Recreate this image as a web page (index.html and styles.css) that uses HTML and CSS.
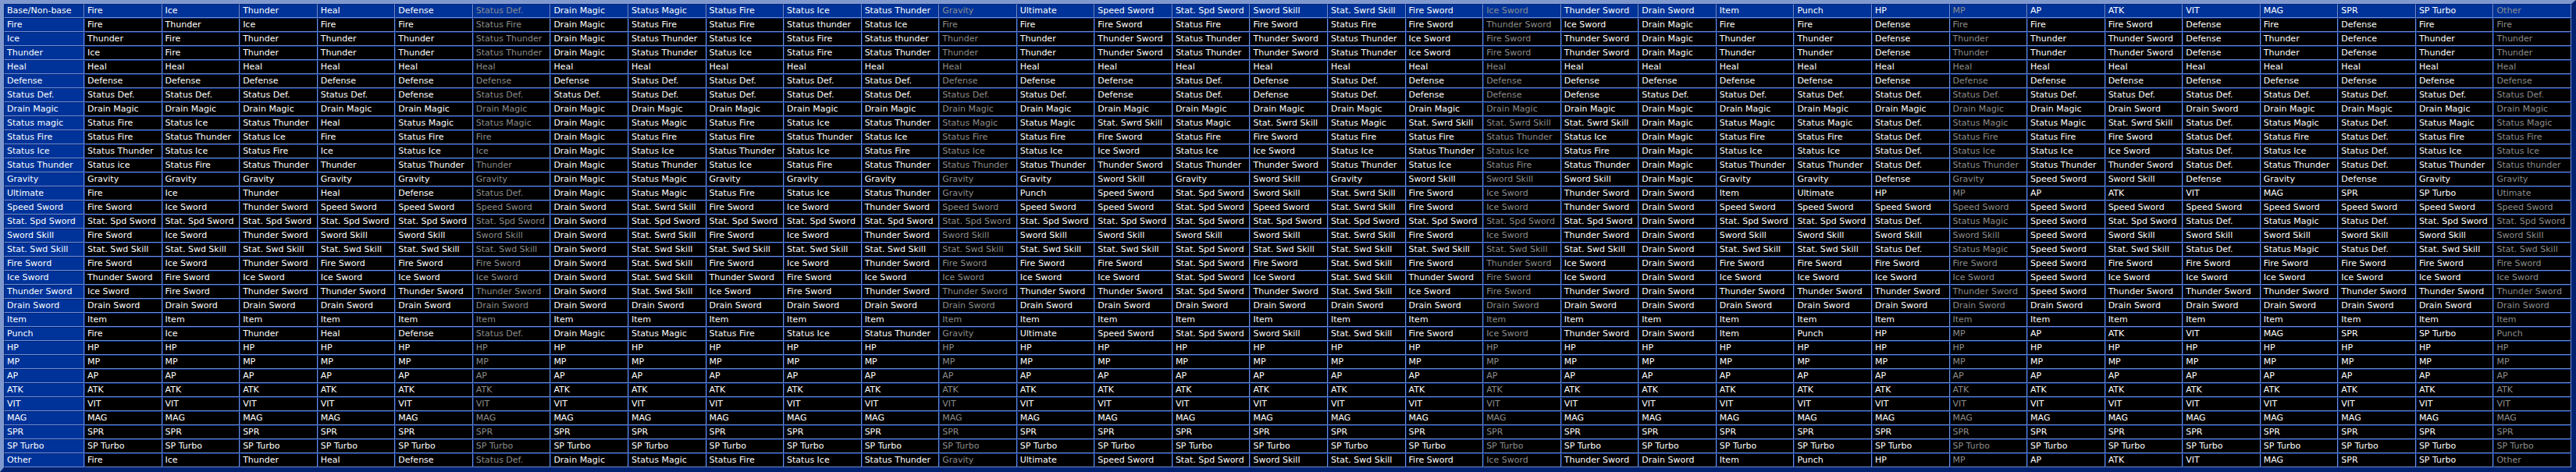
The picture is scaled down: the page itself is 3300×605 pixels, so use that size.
FILE: index.html
```html
<!DOCTYPE html>
<html>
<head>
<meta charset="utf-8">
<title>Materia combinations</title>
<link rel="stylesheet" href="styles.css">
</head>
<body>
<table class="grid">
<colgroup><col class="label-col"></colgroup>
<tr><th>Base/Non-base</th><th>Fire</th><th>Ice</th><th>Thunder</th><th>Heal</th><th>Defense</th><th>Status Def.</th><th>Drain Magic</th><th>Status Magic</th><th>Status Fire</th><th>Status Ice</th><th>Status Thunder</th><th>Gravity</th><th>Ultimate</th><th>Speed Sword</th><th>Stat. Spd Sword</th><th>Sword Skill</th><th>Stat. Swrd Skill</th><th>Fire Sword</th><th>Ice Sword</th><th>Thunder Sword</th><th>Drain Sword</th><th>Item</th><th>Punch</th><th>HP</th><th>MP</th><th>AP</th><th>ATK</th><th>VIT</th><th>MAG</th><th>SPR</th><th>SP Turbo</th><th>Other</th></tr>
<tr><th>Fire</th><td>Fire</td><td>Thunder</td><td>Ice</td><td>Fire</td><td>Fire</td><td>Status Fire</td><td>Drain Magic</td><td>Status Fire</td><td>Status Fire</td><td>Status thunder</td><td>Status Ice</td><td>Fire</td><td>Fire</td><td>Fire Sword</td><td>Status Fire</td><td>Fire Sword</td><td>Status Fire</td><td>Fire Sword</td><td>Thunder Sword</td><td>Ice Sword</td><td>Drain Magic</td><td>Fire</td><td>Fire</td><td>Defense</td><td>Fire</td><td>Fire</td><td>Fire Sword</td><td>Defense</td><td>Fire</td><td>Defense</td><td>Fire</td><td>Fire</td></tr>
<tr><th>Ice</th><td>Thunder</td><td>Fire</td><td>Thunder</td><td>Thunder</td><td>Thunder</td><td>Status Thunder</td><td>Drain Magic</td><td>Status Thunder</td><td>Status Ice</td><td>Status Fire</td><td>Status thunder</td><td>Thunder</td><td>Thunder</td><td>Thunder Sword</td><td>Status Thunder</td><td>Thunder Sword</td><td>Status Thunder</td><td>Ice Sword</td><td>Fire Sword</td><td>Thunder Sword</td><td>Drain Magic</td><td>Thunder</td><td>Thunder</td><td>Defense</td><td>Thunder</td><td>Thunder</td><td>Thunder Sword</td><td>Defense</td><td>Thunder</td><td>Defence</td><td>Thunder</td><td>Thunder</td></tr>
<tr><th>Thunder</th><td>Ice</td><td>Fire</td><td>Thunder</td><td>Thunder</td><td>Thunder</td><td>Status Thunder</td><td>Drain Magic</td><td>Status Thunder</td><td>Status Ice</td><td>Status Fire</td><td>Status Thunder</td><td>Thunder</td><td>Thunder</td><td>Thunder Sword</td><td>Status Thunder</td><td>Thunder Sword</td><td>Status Thunder</td><td>Ice Sword</td><td>Fire Sword</td><td>Thunder Sword</td><td>Drain Magic</td><td>Thunder</td><td>Thunder</td><td>Defense</td><td>Thunder</td><td>Thunder</td><td>Thunder Sword</td><td>Defense</td><td>Thunder</td><td>Defense</td><td>Thunder</td><td>Thunder</td></tr>
<tr><th>Heal</th><td>Heal</td><td>Heal</td><td>Heal</td><td>Heal</td><td>Heal</td><td>Heal</td><td>Heal</td><td>Heal</td><td>Heal</td><td>Heal</td><td>Heal</td><td>Heal</td><td>Heal</td><td>Heal</td><td>Heal</td><td>Heal</td><td>Heal</td><td>Heal</td><td>Heal</td><td>Heal</td><td>Heal</td><td>Heal</td><td>Heal</td><td>Heal</td><td>Heal</td><td>Heal</td><td>Heal</td><td>Heal</td><td>Heal</td><td>Heal</td><td>Heal</td><td>Heal</td></tr>
<tr><th>Defense</th><td>Defense</td><td>Defense</td><td>Defense</td><td>Defense</td><td>Defense</td><td>Defense</td><td>Defense</td><td>Status Def.</td><td>Status Def.</td><td>Status Def.</td><td>Status Def.</td><td>Defense</td><td>Defense</td><td>Defense</td><td>Status Def.</td><td>Defense</td><td>Status Def.</td><td>Defense</td><td>Defense</td><td>Defense</td><td>Defense</td><td>Defense</td><td>Defense</td><td>Defense</td><td>Defense</td><td>Defense</td><td>Defense</td><td>Defense</td><td>Defense</td><td>Defense</td><td>Defense</td><td>Defense</td></tr>
<tr><th>Status Def.</th><td>Status Def.</td><td>Status Def.</td><td>Status Def.</td><td>Status Def.</td><td>Defense</td><td>Status Def.</td><td>Status Def.</td><td>Status Def.</td><td>Status Def.</td><td>Status Def.</td><td>Status Def.</td><td>Status Def.</td><td>Status Def.</td><td>Defense</td><td>Status Def.</td><td>Defense</td><td>Status Def.</td><td>Defense</td><td>Defense</td><td>Defense</td><td>Status Def.</td><td>Status Def.</td><td>Status Def.</td><td>Status Def.</td><td>Status Def.</td><td>Status Def.</td><td>Status Def.</td><td>Status Def.</td><td>Status Def.</td><td>Status Def.</td><td>Status Def.</td><td>Status Def.</td></tr>
<tr><th>Drain Magic</th><td>Drain Magic</td><td>Drain Magic</td><td>Drain Magic</td><td>Drain Magic</td><td>Drain Magic</td><td>Drain Magic</td><td>Drain Magic</td><td>Drain Magic</td><td>Drain Magic</td><td>Drain Magic</td><td>Drain Magic</td><td>Drain Magic</td><td>Drain Magic</td><td>Drain Magic</td><td>Drain Magic</td><td>Drain Magic</td><td>Drain Magic</td><td>Drain Magic</td><td>Drain Magic</td><td>Drain Magic</td><td>Drain Magic</td><td>Drain Magic</td><td>Drain Magic</td><td>Drain Magic</td><td>Drain Magic</td><td>Drain Magic</td><td>Drain Sword</td><td>Drain Sword</td><td>Drain Magic</td><td>Drain Magic</td><td>Drain Magic</td><td>Drain Magic</td></tr>
<tr><th>Status magic</th><td>Status Fire</td><td>Status Ice</td><td>Status Thunder</td><td>Heal</td><td>Status Magic</td><td>Status Magic</td><td>Drain Magic</td><td>Status Magic</td><td>Status Fire</td><td>Status Ice</td><td>Status Thunder</td><td>Status Magic</td><td>Status Magic</td><td>Stat. Swrd Skill</td><td>Status Magic</td><td>Stat. Swrd Skill</td><td>Status Magic</td><td>Stat. Swrd Skill</td><td>Stat. Swrd Skill</td><td>Stat. Swrd Skill</td><td>Drain Magic</td><td>Status Magic</td><td>Status Magic</td><td>Status Def.</td><td>Status Magic</td><td>Status Magic</td><td>Stat. Swrd Skill</td><td>Status Def.</td><td>Status Magic</td><td>Status Def.</td><td>Status Magic</td><td>Status Magic</td></tr>
<tr><th>Status Fire</th><td>Status Fire</td><td>Status Thunder</td><td>Status Ice</td><td>Fire</td><td>Status Fire</td><td>Fire</td><td>Drain Magic</td><td>Status Fire</td><td>Status Fire</td><td>Status Thunder</td><td>Status Ice</td><td>Status Fire</td><td>Status Fire</td><td>Fire Sword</td><td>Status Fire</td><td>Fire Sword</td><td>Status Fire</td><td>Status Fire</td><td>Status Thunder</td><td>Status Ice</td><td>Drain Magic</td><td>Status Fire</td><td>Status Fire</td><td>Status Def.</td><td>Status Fire</td><td>Status Fire</td><td>Fire Sword</td><td>Status Def.</td><td>Status Fire</td><td>Status Def.</td><td>Status Fire</td><td>Status Fire</td></tr>
<tr><th>Status Ice</th><td>Status Thunder</td><td>Status Ice</td><td>Status Fire</td><td>Ice</td><td>Status Ice</td><td>Ice</td><td>Drain Magic</td><td>Status Ice</td><td>Status Thunder</td><td>Status Ice</td><td>Status Fire</td><td>Status Ice</td><td>Status Ice</td><td>Ice Sword</td><td>Status Ice</td><td>Ice Sword</td><td>Status Ice</td><td>Status Thunder</td><td>Status Ice</td><td>Status Fire</td><td>Drain Magic</td><td>Status Ice</td><td>Status Ice</td><td>Status Def.</td><td>Status Ice</td><td>Status Ice</td><td>Ice Sword</td><td>Status Def.</td><td>Status Ice</td><td>Status Def.</td><td>Status Ice</td><td>Status Ice</td></tr>
<tr><th>Status Thunder</th><td>Status ice</td><td>Status Fire</td><td>Status Thunder</td><td>Thunder</td><td>Status Thunder</td><td>Thunder</td><td>Drain Magic</td><td>Status Thunder</td><td>Status Ice</td><td>Status Fire</td><td>Status Thunder</td><td>Status Thunder</td><td>Status Thunder</td><td>Thunder Sword</td><td>Status Thunder</td><td>Thunder Sword</td><td>Status Thunder</td><td>Status Ice</td><td>Status Fire</td><td>Status Thunder</td><td>Drain Magic</td><td>Status Thunder</td><td>Status Thunder</td><td>Status Def.</td><td>Status Thunder</td><td>Status Thunder</td><td>Thunder Sword</td><td>Status Def.</td><td>Status Thunder</td><td>Status Def.</td><td>Status Thunder</td><td>Status thunder</td></tr>
<tr><th>Gravity</th><td>Gravity</td><td>Gravity</td><td>Gravity</td><td>Gravity</td><td>Gravity</td><td>Gravity</td><td>Drain Magic</td><td>Status Magic</td><td>Gravity</td><td>Gravity</td><td>Gravity</td><td>Gravity</td><td>Gravity</td><td>Sword Skill</td><td>Gravity</td><td>Sword Skill</td><td>Gravity</td><td>Sword Skill</td><td>Sword Skill</td><td>Sword Skill</td><td>Drain Magic</td><td>Gravity</td><td>Gravity</td><td>Defense</td><td>Gravity</td><td>Speed Sword</td><td>Sword Skill</td><td>Defense</td><td>Gravity</td><td>Defense</td><td>Gravity</td><td>Gravity</td></tr>
<tr><th>Ultimate</th><td>Fire</td><td>Ice</td><td>Thunder</td><td>Heal</td><td>Defense</td><td>Status Def.</td><td>Drain Magic</td><td>Status Magic</td><td>Status Fire</td><td>Status Ice</td><td>Status Thunder</td><td>Gravity</td><td>Punch</td><td>Speed Sword</td><td>Stat. Spd Sword</td><td>Sword Skill</td><td>Stat. Swrd Skill</td><td>Fire Sword</td><td>Ice Sword</td><td>Thunder Sword</td><td>Drain Sword</td><td>Item</td><td>Ultimate</td><td>HP</td><td>MP</td><td>AP</td><td>ATK</td><td>VIT</td><td>MAG</td><td>SPR</td><td>SP Turbo</td><td>Utimate</td></tr>
<tr><th>Speed Sword</th><td>Fire Sword</td><td>Ice Sword</td><td>Thunder Sword</td><td>Speed Sword</td><td>Speed Sword</td><td>Speed Sword</td><td>Drain Sword</td><td>Stat. Swrd Skill</td><td>Fire Sword</td><td>Ice Sword</td><td>Thunder Sword</td><td>Speed Sword</td><td>Speed Sword</td><td>Speed Sword</td><td>Stat. Spd Sword</td><td>Speed Sword</td><td>Stat. Swrd Skill</td><td>Fire Sword</td><td>Ice Sword</td><td>Thunder Sword</td><td>Drain Sword</td><td>Speed Sword</td><td>Speed Sword</td><td>Speed Sword</td><td>Speed Sword</td><td>Speed Sword</td><td>Speed Sword</td><td>Speed Sword</td><td>Speed Sword</td><td>Speed Sword</td><td>Speed Sword</td><td>Speed Sword</td></tr>
<tr><th>Stat. Spd Sword</th><td>Stat. Spd Sword</td><td>Stat. Spd Sword</td><td>Stat. Spd Sword</td><td>Stat. Spd Sword</td><td>Stat. Spd Sword</td><td>Stat. Spd Sword</td><td>Drain Sword</td><td>Stat. Spd Sword</td><td>Stat. Spd Sword</td><td>Stat. Spd Sword</td><td>Stat. Spd Sword</td><td>Stat. Spd Sword</td><td>Stat. Spd Sword</td><td>Stat. Spd Sword</td><td>Stat. Spd Sword</td><td>Stat. Spd Sword</td><td>Stat. Spd Sword</td><td>Stat. Spd Sword</td><td>Stat. Spd Sword</td><td>Stat. Spd Sword</td><td>Drain Sword</td><td>Stat. Spd Sword</td><td>Stat. Spd Sword</td><td>Status Def.</td><td>Status Magic</td><td>Speed Sword</td><td>Stat. Spd Sword</td><td>Status Def.</td><td>Status Magic</td><td>Status Def.</td><td>Stat. Spd Sword</td><td>Stat. Spd Sword</td></tr>
<tr><th>Sword Skill</th><td>Fire Sword</td><td>Ice Sword</td><td>Thunder Sword</td><td>Sword Skill</td><td>Sword Skill</td><td>Sword Skill</td><td>Drain Sword</td><td>Stat. Swrd Skill</td><td>Fire Sword</td><td>Ice Sword</td><td>Thunder Sword</td><td>Sword Skill</td><td>Sword Skill</td><td>Sword Skill</td><td>Sword Skill</td><td>Sword Skill</td><td>Stat. Swrd Skill</td><td>Fire Sword</td><td>Ice Sword</td><td>Thunder Sword</td><td>Drain Sword</td><td>Sword Skill</td><td>Sword Skill</td><td>Sword Skill</td><td>Sword Skill</td><td>Speed Sword</td><td>Sword Skill</td><td>Sword Skill</td><td>Sword Skill</td><td>Sword Skill</td><td>Sword Skill</td><td>Sword Skill</td></tr>
<tr><th>Stat. Swd Skill</th><td>Stat. Swd Skill</td><td>Stat. Swd Skill</td><td>Stat. Swd Skill</td><td>Stat. Swd Skill</td><td>Stat. Swd Skill</td><td>Stat. Swd Skill</td><td>Drain Sword</td><td>Stat. Swd Skill</td><td>Stat. Swd Skill</td><td>Stat. Swd Skill</td><td>Stat. Swd Skill</td><td>Stat. Swd Skill</td><td>Stat. Swd Skill</td><td>Stat. Swd Skill</td><td>Stat. Spd Sword</td><td>Stat. Swd Skill</td><td>Stat. Swd Skill</td><td>Stat. Swd Skill</td><td>Stat. Swd Skill</td><td>Stat. Swd Skill</td><td>Drain Sword</td><td>Stat. Swd Skill</td><td>Stat. Swd Skill</td><td>Status Def.</td><td>Status Magic</td><td>Speed Sword</td><td>Stat. Swd Skill</td><td>Status Def.</td><td>Status Magic</td><td>Status Def.</td><td>Stat. Swd Skill</td><td>Stat. Swd Skill</td></tr>
<tr><th>Fire Sword</th><td>Fire Sword</td><td>Ice Sword</td><td>Thunder Sword</td><td>Fire Sword</td><td>Fire Sword</td><td>Fire Sword</td><td>Drain Sword</td><td>Stat. Swd Skill</td><td>Fire Sword</td><td>Ice Sword</td><td>Thunder Sword</td><td>Fire Sword</td><td>Fire Sword</td><td>Fire Sword</td><td>Stat. Spd Sword</td><td>Fire Sword</td><td>Stat. Swd Skill</td><td>Fire Sword</td><td>Thunder Sword</td><td>Ice Sword</td><td>Drain Sword</td><td>Fire Sword</td><td>Fire Sword</td><td>Fire Sword</td><td>Fire Sword</td><td>Speed Sword</td><td>Fire Sword</td><td>Fire Sword</td><td>Fire Sword</td><td>Fire Sword</td><td>Fire Sword</td><td>Fire Sword</td></tr>
<tr><th>Ice Sword</th><td>Thunder Sword</td><td>Fire Sword</td><td>Ice Sword</td><td>Ice Sword</td><td>Ice Sword</td><td>Ice Sword</td><td>Drain Sword</td><td>Stat. Swd Skill</td><td>Thunder Sword</td><td>Fire Sword</td><td>Ice Sword</td><td>Ice Sword</td><td>Ice Sword</td><td>Ice Sword</td><td>Stat. Spd Sword</td><td>Ice Sword</td><td>Stat. Swd Skill</td><td>Thunder Sword</td><td>Fire Sword</td><td>Ice Sword</td><td>Drain Sword</td><td>Ice Sword</td><td>Ice Sword</td><td>Ice Sword</td><td>Ice Sword</td><td>Speed Sword</td><td>Ice Sword</td><td>Ice Sword</td><td>Ice Sword</td><td>Ice Sword</td><td>Ice Sword</td><td>Ice Sword</td></tr>
<tr><th>Thunder Sword</th><td>Ice Sword</td><td>Fire Sword</td><td>Thunder Sword</td><td>Thunder Sword</td><td>Thunder Sword</td><td>Thunder Sword</td><td>Drain Sword</td><td>Stat. Swd Skill</td><td>Ice Sword</td><td>Fire Sword</td><td>Thunder Sword</td><td>Thunder Sword</td><td>Thunder Sword</td><td>Thunder Sword</td><td>Stat. Spd Sword</td><td>Thunder Sword</td><td>Stat. Swd Skill</td><td>Ice Sword</td><td>Fire Sword</td><td>Thunder Sword</td><td>Drain Sword</td><td>Thunder Sword</td><td>Thunder Sword</td><td>Thunder Sword</td><td>Thunder Sword</td><td>Speed Sword</td><td>Thunder Sword</td><td>Thunder Sword</td><td>Thunder Sword</td><td>Thunder Sword</td><td>Thunder Sword</td><td>Thunder Sword</td></tr>
<tr><th>Drain Sword</th><td>Drain Sword</td><td>Drain Sword</td><td>Drain Sword</td><td>Drain Sword</td><td>Drain Sword</td><td>Drain Sword</td><td>Drain Sword</td><td>Drain Sword</td><td>Drain Sword</td><td>Drain Sword</td><td>Drain Sword</td><td>Drain Sword</td><td>Drain Sword</td><td>Drain Sword</td><td>Drain Sword</td><td>Drain Sword</td><td>Drain Sword</td><td>Drain Sword</td><td>Drain Sword</td><td>Drain Sword</td><td>Drain Sword</td><td>Drain Sword</td><td>Drain Sword</td><td>Drain Sword</td><td>Drain Sword</td><td>Drain Sword</td><td>Drain Sword</td><td>Drain Sword</td><td>Drain Sword</td><td>Drain Sword</td><td>Drain Sword</td><td>Drain Sword</td></tr>
<tr><th>Item</th><td>Item</td><td>Item</td><td>Item</td><td>Item</td><td>Item</td><td>Item</td><td>Item</td><td>Item</td><td>Item</td><td>Item</td><td>Item</td><td>Item</td><td>Item</td><td>Item</td><td>Item</td><td>Item</td><td>Item</td><td>Item</td><td>Item</td><td>Item</td><td>Item</td><td>Item</td><td>Item</td><td>Item</td><td>Item</td><td>Item</td><td>Item</td><td>Item</td><td>Item</td><td>Item</td><td>Item</td><td>Item</td></tr>
<tr><th>Punch</th><td>Fire</td><td>Ice</td><td>Thunder</td><td>Heal</td><td>Defense</td><td>Status Def.</td><td>Drain Magic</td><td>Status Magic</td><td>Status Fire</td><td>Status Ice</td><td>Status Thunder</td><td>Gravity</td><td>Ultimate</td><td>Speed Sword</td><td>Stat. Spd Sword</td><td>Sword Skill</td><td>Stat. Swd Skill</td><td>Fire Sword</td><td>Ice Sword</td><td>Thunder Sword</td><td>Drain Sword</td><td>Item</td><td>Punch</td><td>HP</td><td>MP</td><td>AP</td><td>ATK</td><td>VIT</td><td>MAG</td><td>SPR</td><td>SP Turbo</td><td>Punch</td></tr>
<tr><th>HP</th><td>HP</td><td>HP</td><td>HP</td><td>HP</td><td>HP</td><td>HP</td><td>HP</td><td>HP</td><td>HP</td><td>HP</td><td>HP</td><td>HP</td><td>HP</td><td>HP</td><td>HP</td><td>HP</td><td>HP</td><td>HP</td><td>HP</td><td>HP</td><td>HP</td><td>HP</td><td>HP</td><td>HP</td><td>HP</td><td>HP</td><td>HP</td><td>HP</td><td>HP</td><td>HP</td><td>HP</td><td>HP</td></tr>
<tr><th>MP</th><td>MP</td><td>MP</td><td>MP</td><td>MP</td><td>MP</td><td>MP</td><td>MP</td><td>MP</td><td>MP</td><td>MP</td><td>MP</td><td>MP</td><td>MP</td><td>MP</td><td>MP</td><td>MP</td><td>MP</td><td>MP</td><td>MP</td><td>MP</td><td>MP</td><td>MP</td><td>MP</td><td>MP</td><td>MP</td><td>MP</td><td>MP</td><td>MP</td><td>MP</td><td>MP</td><td>MP</td><td>MP</td></tr>
<tr><th>AP</th><td>AP</td><td>AP</td><td>AP</td><td>AP</td><td>AP</td><td>AP</td><td>AP</td><td>AP</td><td>AP</td><td>AP</td><td>AP</td><td>AP</td><td>AP</td><td>AP</td><td>AP</td><td>AP</td><td>AP</td><td>AP</td><td>AP</td><td>AP</td><td>AP</td><td>AP</td><td>AP</td><td>AP</td><td>AP</td><td>AP</td><td>AP</td><td>AP</td><td>AP</td><td>AP</td><td>AP</td><td>AP</td></tr>
<tr><th>ATK</th><td>ATK</td><td>ATK</td><td>ATK</td><td>ATK</td><td>ATK</td><td>ATK</td><td>ATK</td><td>ATK</td><td>ATK</td><td>ATK</td><td>ATK</td><td>ATK</td><td>ATK</td><td>ATK</td><td>ATK</td><td>ATK</td><td>ATK</td><td>ATK</td><td>ATK</td><td>ATK</td><td>ATK</td><td>ATK</td><td>ATK</td><td>ATK</td><td>ATK</td><td>ATK</td><td>ATK</td><td>ATK</td><td>ATK</td><td>ATK</td><td>ATK</td><td>ATK</td></tr>
<tr><th>VIT</th><td>VIT</td><td>VIT</td><td>VIT</td><td>VIT</td><td>VIT</td><td>VIT</td><td>VIT</td><td>VIT</td><td>VIT</td><td>VIT</td><td>VIT</td><td>VIT</td><td>VIT</td><td>VIT</td><td>VIT</td><td>VIT</td><td>VIT</td><td>VIT</td><td>VIT</td><td>VIT</td><td>VIT</td><td>VIT</td><td>VIT</td><td>VIT</td><td>VIT</td><td>VIT</td><td>VIT</td><td>VIT</td><td>VIT</td><td>VIT</td><td>VIT</td><td>VIT</td></tr>
<tr><th>MAG</th><td>MAG</td><td>MAG</td><td>MAG</td><td>MAG</td><td>MAG</td><td>MAG</td><td>MAG</td><td>MAG</td><td>MAG</td><td>MAG</td><td>MAG</td><td>MAG</td><td>MAG</td><td>MAG</td><td>MAG</td><td>MAG</td><td>MAG</td><td>MAG</td><td>MAG</td><td>MAG</td><td>MAG</td><td>MAG</td><td>MAG</td><td>MAG</td><td>MAG</td><td>MAG</td><td>MAG</td><td>MAG</td><td>MAG</td><td>MAG</td><td>MAG</td><td>MAG</td></tr>
<tr><th>SPR</th><td>SPR</td><td>SPR</td><td>SPR</td><td>SPR</td><td>SPR</td><td>SPR</td><td>SPR</td><td>SPR</td><td>SPR</td><td>SPR</td><td>SPR</td><td>SPR</td><td>SPR</td><td>SPR</td><td>SPR</td><td>SPR</td><td>SPR</td><td>SPR</td><td>SPR</td><td>SPR</td><td>SPR</td><td>SPR</td><td>SPR</td><td>SPR</td><td>SPR</td><td>SPR</td><td>SPR</td><td>SPR</td><td>SPR</td><td>SPR</td><td>SPR</td><td>SPR</td></tr>
<tr><th>SP Turbo</th><td>SP Turbo</td><td>SP Turbo</td><td>SP Turbo</td><td>SP Turbo</td><td>SP Turbo</td><td>SP Turbo</td><td>SP Turbo</td><td>SP Turbo</td><td>SP Turbo</td><td>SP Turbo</td><td>SP Turbo</td><td>SP Turbo</td><td>SP Turbo</td><td>SP Turbo</td><td>SP Turbo</td><td>SP Turbo</td><td>SP Turbo</td><td>SP Turbo</td><td>SP Turbo</td><td>SP Turbo</td><td>SP Turbo</td><td>SP Turbo</td><td>SP Turbo</td><td>SP Turbo</td><td>SP Turbo</td><td>SP Turbo</td><td>SP Turbo</td><td>SP Turbo</td><td>SP Turbo</td><td>SP Turbo</td><td>SP Turbo</td><td>SP Turbo</td></tr>
<tr><th>Other</th><td>Fire</td><td>Ice</td><td>Thunder</td><td>Heal</td><td>Defense</td><td>Status Def.</td><td>Drain Magic</td><td>Status Magic</td><td>Status Fire</td><td>Status Ice</td><td>Status Thunder</td><td>Gravity</td><td>Ultimate</td><td>Speed Sword</td><td>Stat. Spd Sword</td><td>Sword Skill</td><td>Stat. Swd Skill</td><td>Fire Sword</td><td>Ice Sword</td><td>Thunder Sword</td><td>Drain Sword</td><td>Item</td><td>Punch</td><td>HP</td><td>MP</td><td>AP</td><td>ATK</td><td>VIT</td><td>MAG</td><td>SPR</td><td>SP Turbo</td><td>Other</td></tr>
</table>
</body>
</html>
```
FILE: styles.css
```css
html, body {
  margin: 0;
  padding: 0;
  background: #002270;
}

.grid {
  width: 3300px;
  table-layout: fixed;
  border-collapse: separate;
  border-spacing: 0;
  border-style: solid;
  border-width: 5px 6px 6px 5px;
  border-color: #7f99cf #002270 #002270 #7f99cf;
  background: #000;
  color: #fff;
  font-family: "DejaVu Sans", Verdana, sans-serif;
  font-size: 11px;
}

.label-col {
  width: 103px;
}

.grid th,
.grid td {
  padding: 0 0 0 3px;
  border: 1px solid;
  border-color: #00247a #7190d3 #7190d3 #00247a;
  line-height: 16px;
  white-space: nowrap;
  overflow: hidden;
  text-align: left;
  font-weight: normal;
}

.grid th {
  background: #003399;
}

.grid td {
  background: #000;
}

.grid tr > :nth-child(7),
.grid tr > :nth-child(13),
.grid tr > :nth-child(20),
.grid tr > :nth-child(26),
.grid tr > :nth-child(33) {
  color: #8c8c8c;
}

.grid tr > th:first-child {
  color: #fff;
}
```
